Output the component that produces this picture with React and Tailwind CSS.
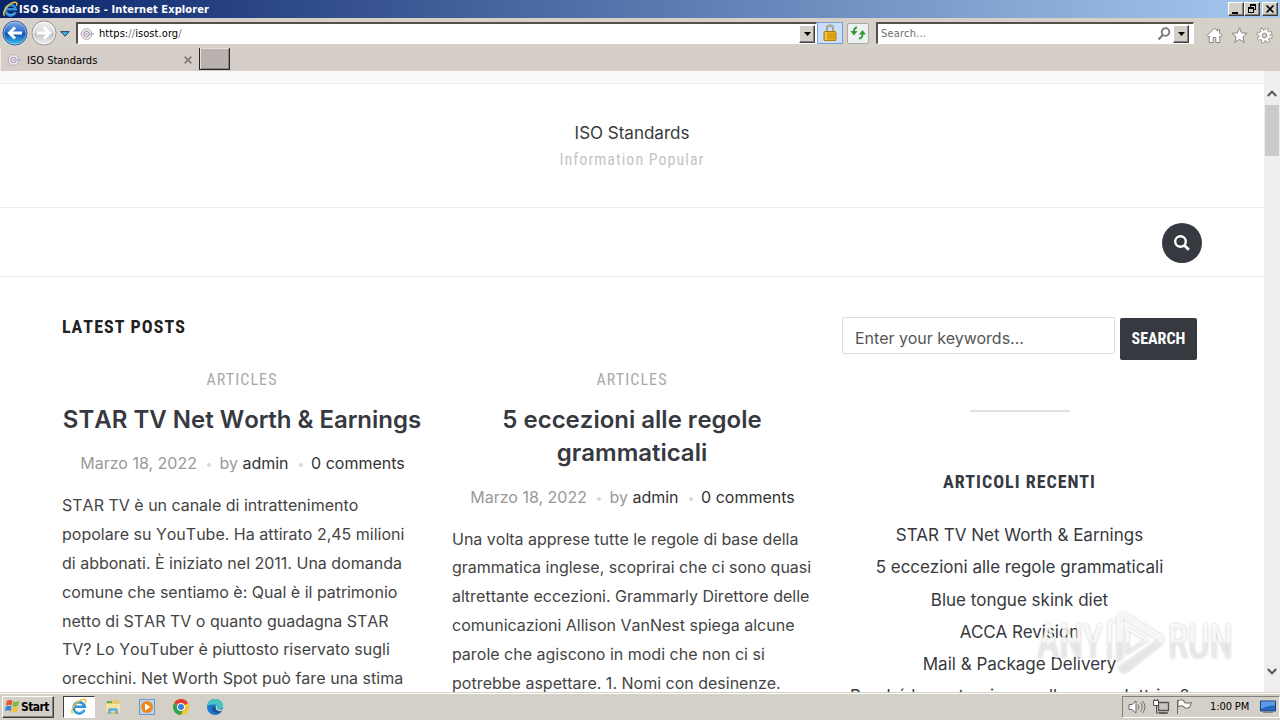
import React from 'react';

const ui = "font-['DejaVu_Sans_Condensed','DejaVu_Sans',sans-serif] [font-stretch:condensed]";
const cond = "font-['Roboto_Condensed','Roboto',sans-serif] [font-stretch:condensed]";

function IELogo({ className }) {
  return (
    <svg viewBox="0 0 18 18" className={className}>
      <path d="M14.400 11.800A5.600 5.600 0 1 1 14.700 8.800H5" fill="none" stroke="#2f8fd8" strokeWidth="2.600" />
      <path d="M14 11.800A5.400 5.400 0 0 1 5 12" fill="none" stroke="#63c5f2" strokeWidth="1" />
      <path d="M2.700 15.600C-.7 12 7 2 13.400 1.400c3-.3 2.600 2.200 1.800 3.700" fill="none" stroke="#eec433" strokeWidth="1.500" />
    </svg>
  );
}

function Favicon() {
  return (
    <svg viewBox="0 0 14 14" className="h-[14px] w-[14px] shrink-0">
      <circle cx="6.500" cy="7" r="5.300" fill="#eeeaf1" stroke="#b9a9b9" />
      <circle cx="6.500" cy="7" r="2.700" fill="none" stroke="#9c8ca8" />
      <circle cx="6.500" cy="7" r="1" fill="#d898a0" />
      <path d="M9 7h5" stroke="#a8bed4" strokeWidth="1.500" />
    </svg>
  );
}

function NavOrb({ back }) {
  return (
    <svg viewBox="0 0 26 26" className="h-[26px] w-[26px] shrink-0">
      <defs>
        <linearGradient id={back ? 'orbBack' : 'orbFwd'} x1="0" y1="0" x2="0" y2="1">
          <stop offset="0" stopColor={back ? '#83aee8' : '#f2f2f2'} />
          <stop offset=".48" stopColor={back ? '#2769c9' : '#d9d9dc'} />
          <stop offset=".52" stopColor={back ? '#1450ae' : '#bfc3c7'} />
          <stop offset="1" stopColor={back ? '#35c5f5' : '#f3f3f3'} />
        </linearGradient>
      </defs>
      <circle cx="13" cy="13" r="12" fill={back ? 'url(#orbBack)' : 'url(#orbFwd)'} stroke={back ? '#455f91' : '#8d8d91'} />
      <circle cx="13" cy="13" r="11" fill="none" stroke="#fff" strokeOpacity={back ? '.35' : '.8'} />
      <path
        d={back ? 'M20 13H8M13 7.500 7.500 13 13 18.500' : 'M6 13h12M13 7.500l5.500 5.500-5.500 5.500'}
        fill="none"
        stroke="#fff"
        strokeWidth="3"
      />
    </svg>
  );
}

function DropButton() {
  return (
    <div className="flex h-[18px] w-4 shrink-0 items-center justify-center border border-t-white border-r-[#404040] border-b-[#404040] border-l-white bg-[#d4d0c8] shadow-[inset_-1px_-1px_#808080]">
      <svg viewBox="0 0 7 4" className="h-1 w-[7px]"><path d="M0 0h7L3.500 4z" /></svg>
    </div>
  );
}

function CaptionButton({ children }) {
  return (
    <div className="h-[14px] w-4 border border-t-white border-r-[#404040] border-b-[#404040] border-l-white bg-[#d4d0c8] shadow-[inset_-1px_-1px_#808080]">
      <svg viewBox="0 0 14 12" className="h-3 w-[14px]">{children}</svg>
    </div>
  );
}

function TitleBar() {
  return (
    <div className="flex h-[18px] items-center bg-linear-to-r/srgb from-[#0a246a] to-[#a6caf0] pr-[2px] pl-[2px]">
      <IELogo className="h-[17px] w-[17px] shrink-0" />
      <span className={`${ui} pt-px text-[11px] leading-[17px] font-bold tracking-[0.1px] whitespace-nowrap text-white`}>
        ISO Standards - Internet Explorer
      </span>
      <div className="ml-auto flex">
        <CaptionButton><path d="M3 9h6v2H3z" /></CaptionButton>
        <CaptionButton>
          <path d="M5 1h6v6H9V6h1V3H6v1H5zM3 4h6v6H3zM4 6v3h4V6z" fillRule="evenodd" />
        </CaptionButton>
        <div className="w-[2px]" />
        <CaptionButton><path d="M3.500 2.500l7 7M10.500 2.500l-7 7" stroke="#000" strokeWidth="1.600" /></CaptionButton>
      </div>
    </div>
  );
}

function Toolbar() {
  return (
    <div className="flex h-[30px] items-center bg-[#d5d0c8] pl-[2px]">
      <NavOrb back />
      <div className="w-[3px]" />
      <NavOrb />
      <svg viewBox="0 0 10 6" className="mt-px ml-[3px] h-[6px] w-[10px] shrink-0"><path d="M.8.6h8.400L5 5.200z" fill="#3cb0e8" stroke="#23406e" /></svg>
      <div className="ml-[6px] flex h-[22px] w-[741px] shrink-0 items-center border-t-2 border-r border-b border-l-2 border-t-[#55504a] border-r-white border-b-white border-l-[#55504a] bg-white pr-px pl-[2px]">
        <Favicon />
        <span className={`${ui} mt-px ml-[5px] text-[11px] tracking-[0.08px] text-black`}>https:<span className="text-[#777]">//</span>isost.org<span className="text-[#777]">/</span></span>
        <div className="ml-auto"><DropButton /></div>
      </div>
      <div className="flex h-[22px] w-[26px] shrink-0 items-center justify-center border border-[#7b9fd4] bg-[#c9dffa]">
        <svg viewBox="0 0 14 18" className="mr-px h-[18px] w-[14px]">
          <path d="M4 8V4.500a3 3 0 0 1 6 0V8" fill="none" stroke="#8a8a78" strokeWidth="2" />
          <path d="M4 8V4.500a3 3 0 0 1 6 0V8" fill="none" stroke="#dadacb" strokeWidth=".7" />
          <rect x="1" y="7.500" width="12" height="9" rx="1" fill="#e9b01d" stroke="#b37b0b" />
          <path d="M1.500 10h11M1.500 12h11M1.500 14h11" stroke="#c98a0c" strokeWidth=".8" />
          <path d="M3 8v8" stroke="#ffe08a" />
        </svg>
      </div>
      <div className="ml-[4px] flex h-[21px] w-[22px] shrink-0 items-center justify-center rounded-[2px] border border-[#aba9a6] bg-[#edf1f1]">
        <svg viewBox="0 0 16 14" className="h-[14px] w-4">
          <path d="M7 1.500Q4 1.500 4 5.500M9 12.500q3.500 0 3.500-4.500" fill="none" stroke="#329b38" strokeWidth="1.900" />
          <path d="M.5 5H7.500L4 9.500zM9 8.500h7L12.500 4z" fill="#329b38" />
        </svg>
      </div>
      <div className="ml-[7px] flex h-[22px] w-[318px] shrink-0 items-center border-t-2 border-r border-b border-l-2 border-t-[#55504a] border-r-white border-b-white border-l-[#55504a] bg-white pr-[4px] pl-[3px]">
        <span className={`${ui} mt-px text-[11px] tracking-[0.2px] text-[#707070]`}>Search...</span>
        <svg viewBox="0 0 14 14" className="mr-[2px] ml-auto h-[14px] w-[14px]">
          <circle cx="8.500" cy="5" r="3.800" fill="none" stroke="#77777b" strokeWidth="1.800" />
          <path d="M5.800 8 1.500 12.500" stroke="#77777b" strokeWidth="2" />
        </svg>
        <DropButton />
      </div>
      <div className="mt-[4px] ml-[12px] flex gap-[8px]">
        <svg viewBox="0 0 17 17" className="h-[17px] w-[17px]"><path d="M8.500 1 1 8.500l1.300 1.300.9-.8v6.500h4v-5h2.600v5h4V9l.9.800L16 8.500l-2.500-2.600V2.500h-2v1.600z" fill="#fff" stroke="#89857f" /></svg>
        <svg viewBox="0 0 17 17" className="h-[17px] w-[17px]"><path d="m8.500.8 2.100 5.100 5.500.4-4.200 3.600 1.300 5.400-4.700-2.900-4.700 2.900 1.300-5.400L.9 6.300l5.500-.4z" fill="#fff" stroke="#89857f" /></svg>
        <svg viewBox="0 0 17 17" className="h-[17px] w-[17px]">
          <circle cx="8.500" cy="8.500" r="6.300" fill="none" stroke="#89857f" strokeWidth="3.600" strokeDasharray="2.700 2.248" />
          <circle cx="8.500" cy="8.500" r="5.700" fill="#fff" stroke="#89857f" />
          <circle cx="8.500" cy="8.500" r="6" fill="none" stroke="#fff" strokeWidth="2.600" strokeDasharray="1.900 2.812" strokeDashoffset="-.3" />
          <circle cx="8.500" cy="8.500" r="2.300" fill="#d5d0c8" stroke="#89857f" />
        </svg>
      </div>
    </div>
  );
}

function TabStrip() {
  return (
    <div className="flex h-[23px] items-start bg-[#d5cdc7]">
      <div className="flex h-[23px] w-[199px] items-center border-l border-[#eeeae5] pl-[6px]">
        <Favicon />
        <span className={`${ui} mt-[3px] ml-[6px] text-[11px] text-black`}>ISO Standards</span>
        <svg viewBox="0 0 8 8" className="mr-[7px] ml-auto h-2 w-2"><path d="m.7.7 6.600 6.600M7.300.7.700 7.300" stroke="#85817c" strokeWidth="1.900" /></svg>
      </div>
      <div className="h-[22px] w-[31px] border-r border-b border-l border-[#282522] bg-[#b9b2ae] shadow-[inset_1px_1px_#e5e0db,inset_-1px_-1px_#8b8581]" />
    </div>
  );
}

function Dot() {
  return <span className="mt-1 ml-[2px] h-1 w-1 shrink-0 rounded-full bg-[#d9d9d9]" />;
}

function Post({ titleLines, lines }) {
  return (
    <article className="w-[360px] shrink-0">
      <div className={`${cond} h-6 text-center text-[16px] leading-6 tracking-[1.1px] text-[#a8a8a8]`}>ARTICLES</div>
      <h2 className="mt-[11px] text-center text-[24px] leading-[33.2px] font-semibold whitespace-nowrap text-[#363940] [font-kerning:none]">
        {titleLines.map((line) => <div key={line}>{line}</div>)}
      </h2>
      <div className="mt-[15.200px] flex h-6 items-center justify-center pl-px text-[16px] whitespace-nowrap text-[#999]">
        <span>Marzo 18, 2022</span>
        <span className="flex w-[22.500px] justify-center"><Dot /></span>
        <span>by <span className="text-[#333]">admin</span></span>
        <span className="flex w-[22.500px] justify-center"><Dot /></span>
        <span className="text-[#333]">0 comments</span>
      </div>
      <div className="mt-[16.100px] text-[16px] leading-[28.8px] whitespace-nowrap text-[#444] [font-kerning:none]">
        {lines.map((line) => <div key={line}>{line}</div>)}
      </div>
    </article>
  );
}

const posts = [
  {
    titleLines: ['STAR TV Net Worth & Earnings'],
    lines: [
      'STAR TV è un canale di intrattenimento',
      'popolare su YouTube. Ha attirato 2,45 milioni',
      'di abbonati. È iniziato nel 2011. Una domanda',
      'comune che sentiamo è: Qual è il patrimonio',
      'netto di STAR TV o quanto guadagna STAR',
      'TV? Lo YouTuber è piuttosto riservato sugli',
      'orecchini. Net Worth Spot può fare una stima',
    ],
  },
  {
    titleLines: ['5 eccezioni alle regole', 'grammaticali'],
    lines: [
      'Una volta apprese tutte le regole di base della',
      'grammatica inglese, scoprirai che ci sono quasi',
      'altrettante eccezioni. Grammarly Direttore delle',
      'comunicazioni Allison VanNest spiega alcune',
      'parole che agiscono in modi che non ci si',
      'potrebbe aspettare. 1. Nomi con desinenze.',
    ],
  },
];

const recent = [
  'STAR TV Net Worth & Earnings',
  '5 eccezioni alle regole grammaticali',
  'Blue tongue skink diet',
  'ACCA Revision',
  'Mail & Package Delivery',
  'Perché la costruzione galleggara dottrine?',
];

function Sidebar() {
  return (
    <aside className="w-[355px] shrink-0 pt-10">
      <div className="flex items-start gap-[5px]">
        <div className="h-[37px] w-[273px] shrink-0 rounded-[2px] border border-[#dcdcdc] pt-[2px] pl-3 text-[16px] leading-[37px] text-[#555]">Enter your keywords...</div>
        <div className={`${cond} mt-px h-[42px] w-[77px] shrink-0 rounded-[2px] bg-[#363940] text-center text-[16px] leading-[41px] font-bold text-white`}>SEARCH</div>
      </div>
      <div className="mx-auto mt-[50px] h-[2px] w-[100px] bg-[#e2e2e2]" />
      <h3 className={`${cond} mt-[58px] text-center text-[18px] leading-6 font-bold tracking-[1px] text-[#363940]`}>ARTICOLI RECENTI</h3>
      <div className="mt-[25px] text-center text-[17px] leading-[32.3px] whitespace-nowrap text-[#363940]">
        {recent.map((item) => <div key={item}>{item}</div>)}
      </div>
    </aside>
  );
}

function Watermark() {
  return (
    <div className="absolute top-[536px] left-[1036px]">
      <svg viewBox="0 0 198 68" className="h-[68px] w-[198px] overflow-visible font-['Roboto_Condensed','Roboto',sans-serif] [filter:drop-shadow(0_0_1.5px_rgba(0,0,0,0.26))]">
        <defs>
          <linearGradient id="mark" x1="0" y1="0" x2="0" y2="68" gradientUnits="userSpaceOnUse">
            <stop offset=".5" stopColor="#fff" />
            <stop offset=".54" stopColor="#ebebeb" />
          </linearGradient>
        </defs>
        <g fill="url(#mark)" fillOpacity=".8">
          <text x="1" y="51" fontSize="49" fontWeight="400" textLength="66" lengthAdjust="spacingAndGlyphs">ANY</text>
          <text x="132" y="51" fontSize="49" fontWeight="400" textLength="65" lengthAdjust="spacingAndGlyphs">RUN</text>
          <path d="M72 15l6-3v3l-3 2v36h-3z" />
          <path d="M81 8l7-3 39 24v7L90 66l-7-2v-4l39-27-35-21v39l-6 4z" fillRule="evenodd" />
          <path d="M90 19l23 14-23 15zM93 24v19l15-10z" fillRule="evenodd" />
        </g>
      </svg>
    </div>
  );
}

function ScrollBar() {
  return (
    <div className="flex w-4 shrink-0 flex-col items-center bg-[#eeeeee] pt-[19px] pb-[17px]">
      <svg viewBox="0 0 10 7" className="h-[7px] w-[10px]"><path d="m.8 6 4.200-4.400L9.200 6" fill="none" stroke="#555" strokeWidth="2" /></svg>
      <div className="mt-[8px] h-[51px] w-[14px] bg-[#cbcbcb]" />
      <svg viewBox="0 0 10 7" className="mt-auto h-[7px] w-[10px]"><path d="m.8 1 4.200 4.400L9.200 1" fill="none" stroke="#555" strokeWidth="2" /></svg>
    </div>
  );
}

function Page() {
  return (
    <div className="relative h-[621px] w-[1264px] overflow-hidden bg-white font-['Inter',sans-serif]">
      <div className="h-[13px] border-b border-[#ececec] bg-[#fafafa]" />
      <header className="h-[124px] border-b border-[#ececec] pt-9 text-center">
        <div className="text-[17px] leading-[26px] text-[#363940]">ISO Standards</div>
        <div className={`${cond} text-[16px] leading-[27px] tracking-[1px] text-[#c5c5c5]`}>Information Popular</div>
      </header>
      <div className="flex h-[69px] items-center justify-end border-b border-[#ececec] pt-[2px] pr-[62px]">
        <div className="flex h-10 w-10 items-center justify-center rounded-full bg-[#363940]">
          <svg viewBox="0 0 18 18" className="h-[18px] w-[18px]" fill="none" stroke="#fff">
            <circle cx="7.500" cy="7.500" r="5.300" strokeWidth="2.400" />
            <path d="m11.500 11.500 4.300 4.300" strokeWidth="2.700" />
          </svg>
        </div>
      </div>
      <main className="flex gap-[30px] pl-[62px]">
        <div className="w-[750px] shrink-0 pt-[38px]">
          <h3 className={`${cond} text-[18px] leading-6 font-bold tracking-[1px] text-[#222] [font-kerning:none]`}>LATEST POSTS</h3>
          <div className="mt-[29px] flex items-start gap-[30px]">
            {posts.map((post) => <Post key={post.titleLines[0]} {...post} />)}
          </div>
        </div>
        <Sidebar />
      </main>
      <Watermark />
    </div>
  );
}

function TaskIcon({ children }) {
  return <svg viewBox="0 0 18 18" className="h-[18px] w-[18px]">{children}</svg>;
}

function TaskBar() {
  return (
    <div className="flex h-7 items-center border-t border-[#d4d0c8] bg-[#d4d0c8] shadow-[inset_0_1px_#fff]">
      <div className={`${ui} ml-[2px] flex h-[22px] w-[52px] items-center border border-t-white border-r-[#404040] border-b-[#404040] border-l-white pl-px text-[12px] font-bold tracking-[-0.55px] text-black shadow-[inset_-1px_-1px_#808080]`}>
        <svg viewBox="0 0 18 18" className="h-[17px] w-[17px] shrink-0">
          <path d="M3 3q3-2 6 0L8 8Q5 6.500 2 8z" fill="#e7562f" />
          <path d="M10 3.500q3 1.500 6-.5L15 8q-3 2-6 .5z" fill="#75b843" />
          <path d="M2 9q3-1.500 6 0l-1 5q-3-2-6 0z" fill="#3d7fd0" />
          <path d="M9 9.500q3 1.500 6-.5l-1 5q-3 2-6 .5z" fill="#f5c22e" />
        </svg>
        Start
      </div>
      <div className="ml-[9px] flex h-[22px] w-[32px] items-center justify-center border border-t-[#404040] border-r-white border-b-white border-l-[#404040] bg-white">
        <IELogo className="h-[18px] w-[18px]" />
      </div>
      <div className="ml-[9px] flex gap-4">
        <TaskIcon>
          <path d="M2 4h6l1-2h6v14H2z" fill="#eac766" />
          <path d="M3 3h5v2H3z" fill="#5bb05a" />
          <path d="M2 6h14v8H2z" fill="#f7e4a1" />
          <path d="M4 16v-4q0-2 2-2h6q2 0 2 2v4h-3v-3H7v3z" fill="#69b4dc" />
        </TaskIcon>
        <TaskIcon>
          <rect x="1.500" y="1.500" width="15" height="15" fill="#b9d5ee" stroke="#6a9ac8" />
          <circle cx="9" cy="9" r="6" fill="#f0851c" />
          <path d="m7 5.500 5.500 3.500L7 12.500z" fill="#fff" />
        </TaskIcon>
        <TaskIcon>
          <circle cx="9" cy="9" r="8" fill="#f9c623" />
          <path d="M9 9 2.070 5A8 8 0 0 1 16 5.200z" fill="#df3e31" />
          <path d="M9 9 2.070 5A8 8 0 0 0 8.500 17l3.500-6z" fill="#32a350" />
          <circle cx="9" cy="9" r="4" fill="#fff" />
          <circle cx="9" cy="9" r="3" fill="#3c7de0" />
        </TaskIcon>
        <TaskIcon>
          <circle cx="9" cy="9" r="8" fill="#1b78cc" />
          <path d="M1 8.500C2 3 6 1 9 1c5 0 8 3.500 8 7 0 3-4 4-6 3 1-1 .7-4.500-3-4.500C5 6.500 2 7 1 8.500z" fill="#45c4c0" />
          <path d="M6.500 8q-2 5 3.500 7 3 .7 6-2-3 .8-5-2z" fill="#125394" />
          <path d="M11 11q1-2-.5-3.800Q9 9.500 10 11.500q3 2.800 6.300.8L17 11q-3 1.500-6 0z" fill="#d4d0c8" />
        </TaskIcon>
      </div>
      <div className="ml-auto flex h-[22px] w-[158px] items-center border border-t-[#808080] border-r-white border-b-white border-l-[#808080] pl-[5px]">
        <svg viewBox="0 0 18 16" className="h-4 w-[18px]">
          <path d="M1 5.500h3L8 2v12l-4-3.500H1z" fill="#fff" stroke="#6a6762" />
          <path d="M10 5.500q2 2.500 0 5M12.500 3.500q3.500 4.500 0 9M14.500 2q5 6 0 12" fill="none" stroke="#77736e" />
        </svg>
        <svg viewBox="0 0 18 18" className="ml-[6px] h-[18px] w-[18px]">
          <path d="M4.500 7v8h9" fill="none" stroke="#55524e" />
          <path d="M6.500 4.500h10v8h-10zM7 15h9" fill="#c5c5c2" stroke="#55524e" strokeWidth="1.300" />
          <path d="M1.500 2.500h5v5h-5zM2.500 1v2M5.500 1v2" fill="#fff" stroke="#55524e" />
        </svg>
        <svg viewBox="0 0 17 17" className="ml-[6px] h-[17px] w-[17px]"><path d="M1.500 16V2M2 2.500q3-1.500 6 0v2q4 1.500 7.500 0l-2 5q-3 1.500-5.500 0v-1q-3-1.500-6 0z" fill="#fff" stroke="#6a6762" /></svg>
        <span className={`${ui} mt-[2px] ml-[17px] text-[11px] tracking-[-0.1px] whitespace-nowrap text-black`}>1:00 PM</span>
        <svg viewBox="0 0 16 14" className="mr-[3px] ml-auto h-[14px] w-4"><path d="M.5 1h15v10H.5z" fill="#2868c0" stroke="#174079" /><path d="M1 1.500h14v4Q7 5 1 9z" fill="#5c9ce4" /><path d="M3 12.500h10" stroke="#888" /></svg>
      </div>
    </div>
  );
}

export default function App() {
  return (
    <div className="flex h-[720px] w-[1280px] flex-col overflow-hidden bg-white">
      <TitleBar />
      <Toolbar />
      <TabStrip />
      <div className="flex h-[621px]">
        <Page />
        <ScrollBar />
      </div>
      <TaskBar />
    </div>
  );
}
